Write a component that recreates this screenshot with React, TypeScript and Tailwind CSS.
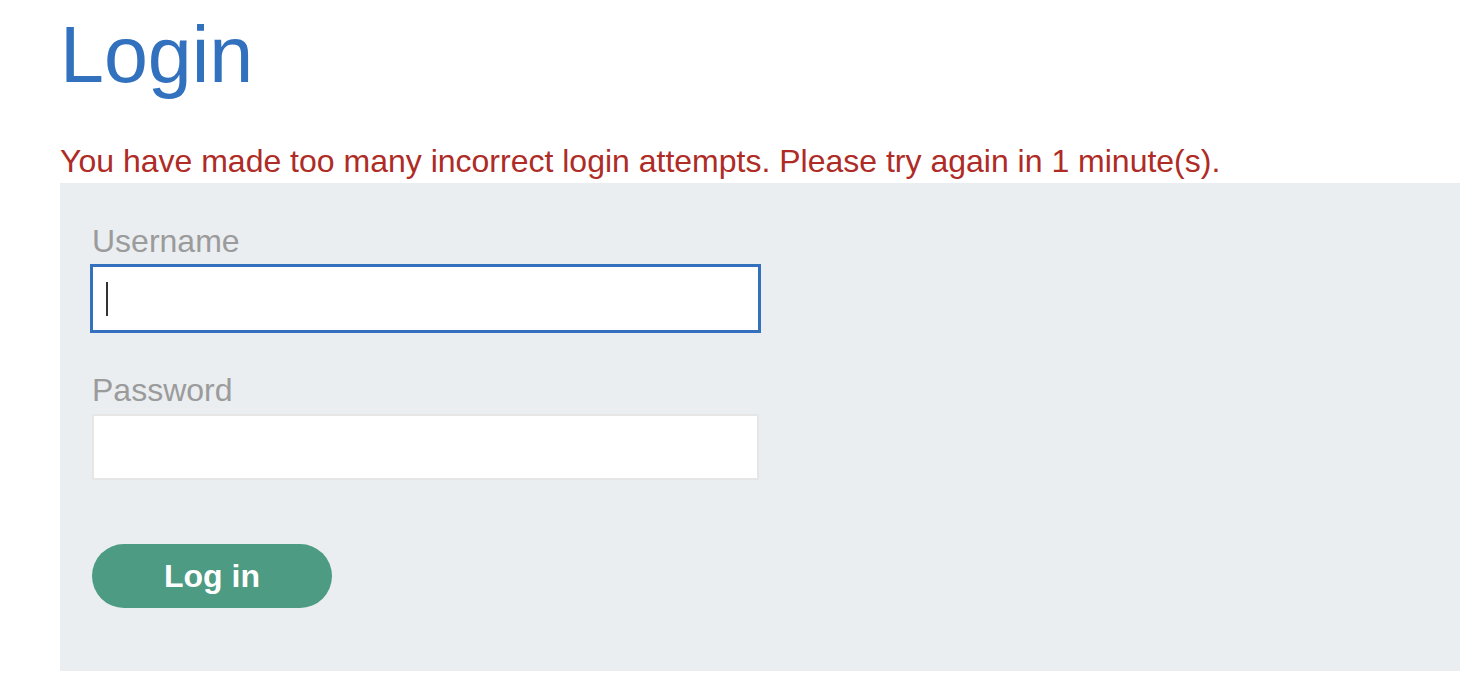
import React from "react";

export default function App() {
  return (
    <div className="min-h-[688px] w-[1472px] bg-white" style={{ fontFamily: '"Liberation Sans", Arial, sans-serif' }}>
      <div className="pl-[60px] pr-[12px]">
        <h1 className="text-[79px] leading-[80px] pt-[15px] text-[#3171be] font-normal">Login</h1>
        <p className="mt-[48px] mb-[4px] text-[32px] leading-[36px] text-[#ae2b26]">
          You have made too many incorrect login attempts. Please try again in 1 minute(s).
        </p>
        <div className="bg-[#eaeef1] h-[488px] pl-[32px] pt-[40px]">
          <label className="block text-[32px] leading-[36px] text-[#9b9b9b]">Username</label>
          <div className="mt-[5px] ml-[-2px] w-[671px] h-[69px] border-[3px] border-[#3370be] bg-white flex items-center pl-[13px]">
            <span className="block w-[2px] h-[34px] bg-[#333]" />
          </div>
          <label className="block mt-[39px] text-[32px] leading-[36px] text-[#9b9b9b]">Password</label>
          <div className="mt-[6px] w-[667px] h-[66px] border-[2px] border-[#e6e6e6] bg-white" />
          <button className="mt-[64px] w-[240px] h-[64px] rounded-full bg-[#4c9b82] text-white text-[32px] font-bold flex items-center justify-center">
            Log in
          </button>
        </div>
      </div>
    </div>
  );
}
